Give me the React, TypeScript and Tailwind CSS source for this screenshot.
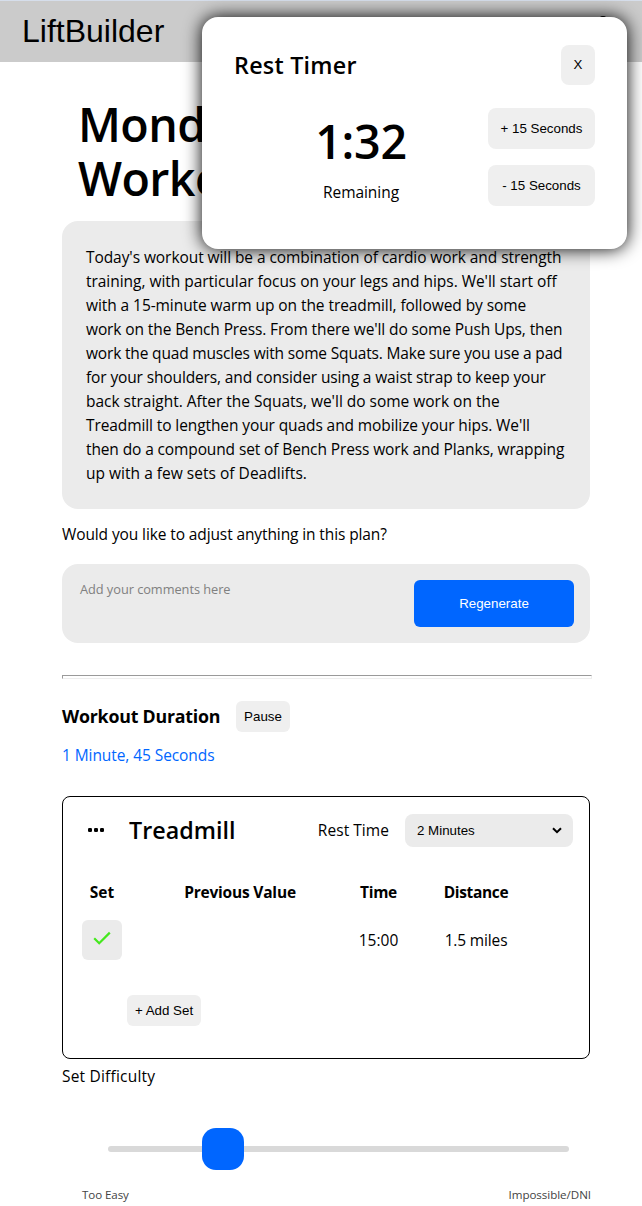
import { User } from "lucide-react";

const planLines = [
  { text: "Today's workout will be a combination of cardio work and strength", tracking: "tracking-[-0.075px]" },
  { text: "training, with particular focus on your legs and hips. We'll start off", tracking: "tracking-[-0.035px]" },
  { text: "with a 15-minute warm up on the treadmill, followed by some", tracking: "tracking-[-0.075px]" },
  { text: "work on the Bench Press. From there we'll do some Push Ups, then", tracking: "tracking-[-0.11px]" },
  { text: "work the quad muscles with some Squats. Make sure you use a pad", tracking: "tracking-[-0.17px]" },
  { text: "for your shoulders, and consider using a waist strap to keep your", tracking: "tracking-[-0.13px]" },
  { text: "back straight. After the Squats, we'll do some work on the", tracking: "tracking-[-0.015px]" },
  { text: "Treadmill to lengthen your quads and mobilize your hips. We'll", tracking: "tracking-[-0.1px]" },
  { text: "then do a compound set of Bench Press work and Planks, wrapping", tracking: "tracking-[-0.12px]" },
  { text: "up with a few sets of Deadlifts.", tracking: "tracking-[0.02px]" },
];

const buttonBase =
  "flex items-center justify-center bg-[#efefef] font-['Liberation_Sans',sans-serif] text-[13.33px] leading-none whitespace-nowrap text-black";

function Header() {
  return (
    <header className="flex h-[62px] items-center justify-between border-t border-[#d6deeb] bg-[#cbcbcb] pr-[27px] pb-0.5 pl-[22px]">
      <span className="font-['Liberation_Sans',sans-serif] text-[32px] leading-none">LiftBuilder</span>
      <User size={24} strokeWidth={2} className="mb-2.5" />
    </header>
  );
}

function RestTimer() {
  return (
    <aside className="absolute top-[17px] left-[202px] flex h-[232px] w-[425px] flex-col rounded-2xl bg-white pt-7 pr-8 pl-[33px] shadow-[0_0_18px_#000]">
      <div className="flex h-10 items-center justify-between">
        <h2 className="-ml-px text-[23.3px] leading-8 font-semibold tracking-[0.25px]">Rest Timer</h2>
        <button className={`${buttonBase} h-10 w-[34px] rounded-lg`}>X</button>
      </div>
      <div className="mt-[23px] flex justify-between">
        <div className="flex w-[252px] flex-col items-center pt-[6px]">
          <span className="text-[46.6px] leading-[54px] font-semibold tracking-[-0.3px]">1:32</span>
          <span className="mt-3 leading-6 tracking-[-0.05px]">Remaining</span>
        </div>
        <div className="flex w-[107px] flex-col gap-4">
          <button className={`${buttonBase} h-[41px] rounded-lg`}>+ 15 Seconds</button>
          <button className={`${buttonBase} h-[41px] rounded-lg`}>- 15 Seconds</button>
        </div>
      </div>
    </aside>
  );
}

function ExerciseCard() {
  return (
    <section className="mt-[29px] h-[263px] rounded-lg border border-black pt-4 pr-4">
      <div className="flex h-[34px] items-center">
        <svg viewBox="0 0 16 4" className="ml-[25px] h-1 w-4" fill="black">
          <rect x="0" y="0" width="4" height="4" rx="1.3" />
          <rect x="6" y="0" width="4" height="4" rx="1.3" />
          <rect x="12" y="0" width="4" height="4" rx="1.3" />
        </svg>
        <h2 className="-mt-px ml-[25px] text-[23.3px] leading-8 font-semibold">Treadmill</h2>
        <span className="mr-4 ml-auto leading-6 tracking-[0.05px]">Rest Time</span>
        <div className="mt-px flex h-[33px] w-[168px] items-center justify-between rounded-lg bg-[#ebebeb] pr-[11px] pl-3 font-['Liberation_Sans',sans-serif] text-[13.33px]">
          <span>2 Minutes</span>
          <svg viewBox="0 0 10 7" className="h-[7px] w-[10px]" fill="none" stroke="black" strokeWidth="2">
            <path d="M1 1.2 5 5.2 9 1.2" />
          </svg>
        </div>
      </div>
      <div className="mt-[33px] ml-[19px] grid grid-cols-[40px_236px_41px_154px] justify-items-center font-bold leading-6 whitespace-nowrap">
        <span className="tracking-[0.1px]">Set</span>
        <span className="tracking-[-0.2px]">Previous Value</span>
        <span className="tracking-[-0.3px]">Time</span>
        <span className="tracking-[-0.35px]">Distance</span>
      </div>
      <div className="mt-4 ml-[19px] grid h-10 grid-cols-[40px_236px_41px_154px] items-center justify-items-center">
        <button className="flex size-10 items-center justify-center rounded-md bg-[#ebebeb]">
          <svg viewBox="0 0 18 14" className="mb-1 h-[14px] w-[18px]" fill="none" stroke="#45e81e" strokeWidth="2.2">
            <path d="M1.2 7.2 6.2 12.2 16.8 1.6" />
          </svg>
        </button>
        <span />
        <span className="leading-6">15:00</span>
        <span className="leading-6 tracking-[-0.15px]">1.5 miles</span>
      </div>
      <button className={`${buttonBase} mt-[35px] ml-16 h-[31px] w-[74px] rounded-md`}>+ Add Set</button>
    </section>
  );
}

function DifficultySlider() {
  return (
    <section>
      <p className="mt-[5px] leading-6 tracking-[0.2px]">Set Difficulty</p>
      <div className="mt-10 ml-[46px] flex h-[42px] w-[461px] items-center">
        <div className="h-1.5 w-[94px] rounded-l-full bg-[#d9d9d9]" />
        <div className="size-[42px] rounded-[14px] bg-[#0066ff]" />
        <div className="h-1.5 flex-1 rounded-r-full bg-[#d9d9d9]" />
      </div>
      <div className="mt-4 -mr-px ml-5 flex justify-between text-[11.6px] leading-[18px] text-[#444]">
        <span className="tracking-[-0.1px]">Too Easy</span>
        <span className="tracking-[-0.05px]">Impossible/DNI</span>
      </div>
    </section>
  );
}

export default function App() {
  return (
    <div className="relative h-[1206px] w-[642px] overflow-hidden bg-white font-['Open_Sans',sans-serif] text-[15.5px] text-black">
      <Header />
      <main className="ml-[62px] w-[528px]">
        <h1 className="pt-[35px] pl-4 text-[46.6px] leading-[54px] font-semibold tracking-[-0.6px]">
          Monday
          <br />
          Workout
        </h1>
        <p className="mt-4 rounded-2xl bg-[#ebebeb] p-6 leading-6 whitespace-nowrap">
          {planLines.map((line) => (
            <span key={line.text} className={`block ${line.tracking}`}>
              {line.text}
            </span>
          ))}
        </p>
        <p className="mt-[13px] leading-6 tracking-[-0.11px]">Would you like to adjust anything in this plan?</p>
        <div className="mt-[18px] flex h-[79px] justify-between rounded-2xl bg-[#ebebeb] pt-[13px] pr-4 pl-[18px]">
          <span className="text-[12.8px] leading-6 tracking-[-0.05px] text-[#808080]">Add your comments here</span>
          <button className="mt-[3px] h-[47px] w-40 rounded-md bg-[#0066ff] font-['Liberation_Sans',sans-serif] text-[13.33px] text-white">
            Regenerate
          </button>
        </div>
        <div className="mt-8 h-1 w-[530px] border border-t-[#9a9a9a] border-r-[#eeeeee] border-b-[#eeeeee] border-l-[#9a9a9a]" />
        <div className="mt-[22px] flex h-[31px] items-center">
          <h3 className="w-[174px] pb-px text-[17.8px] leading-6 font-bold tracking-[-0.22px] whitespace-nowrap">Workout Duration</h3>
          <button className={`${buttonBase} h-[31px] w-[54px] rounded-md`}>Pause</button>
        </div>
        <p className="mt-[11px] leading-6 tracking-[-0.08px] text-[#0066ff]">1 Minute, 45 Seconds</p>
        <ExerciseCard />
        <DifficultySlider />
      </main>
      <RestTimer />
    </div>
  );
}
